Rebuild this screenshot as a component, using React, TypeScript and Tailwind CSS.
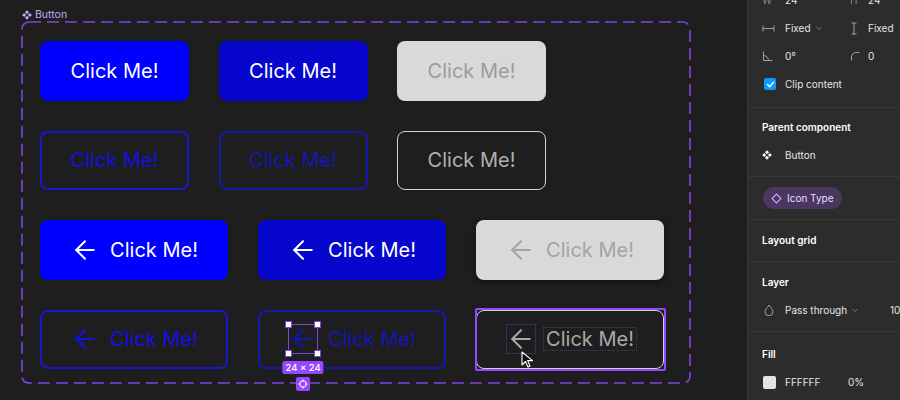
import React from "react";

function Arrow({ className }: { className: string }) {
  return (
    <svg width="30" height="30" viewBox="0 0 24 24" fill="none" className={className} stroke="currentColor" strokeWidth="1.6" strokeLinecap="round" strokeLinejoin="round">
      <path d="M19 12H5" />
      <path d="m12 19-7-7 7-7" />
    </svg>
  );
}

function CompIcon({ className }: { className: string }) {
  return (
    <svg width="10" height="10" viewBox="0 0 10 10" className={className} fill="currentColor">
      <path d="M5 0.2 L7 2.2 L5 4.2 L3 2.2Z" />
      <path d="M2.2 3 L4.2 5 L2.2 7 L0.2 5Z" />
      <path d="M7.8 3 L9.8 5 L7.8 7 L5.8 5Z" />
      <path d="M5 5.8 L7 7.8 L5 9.8 L3 7.8Z" />
    </svg>
  );
}

function Chevron() {
  return (
    <svg width="8" height="8" viewBox="0 0 8 8" fill="none" stroke="#7a7a7a" strokeWidth="1" className="ml-[4px] shrink-0">
      <path d="M1.5 3 L4 5.5 L6.5 3" />
    </svg>
  );
}

export default function App() {
  const label = "text-[20px] leading-none whitespace-nowrap";
  return (
    <div className="w-[900px] h-[400px] flex overflow-hidden bg-[#1e1e1e] font-['Inter','Noto_Sans',sans-serif]">
      {/* Canvas */}
      <div className="flex-1 h-full pl-[21px] pt-[8px]">
        <div className="flex items-center h-[13px] pl-[1px] gap-[3px] text-[10.5px] leading-[13px] text-[#c3a9f0]">
          <CompIcon className="text-[#c3a9f0]" />
          <span>Button</span>
        </div>
        <div className="relative w-[670px] h-[363px] pl-[19px] pt-[20px]">
          <svg className="absolute inset-0 pointer-events-none" width="670" height="363">
            <rect x="1" y="1" width="668" height="361" rx="7" fill="none" stroke="#8244e0" strokeWidth="1.6" strokeDasharray="12 6" />
          </svg>
          <div className="flex flex-col gap-[30px]">
            {/* Row 1 */}
            <div className="flex gap-[29.5px]">
              <div className="w-[149px] h-[59.5px] rounded-lg bg-[#0000ff] text-white flex items-center justify-center">
                <span className={label}>Click Me!</span>
              </div>
              <div className="w-[149px] h-[59.5px] rounded-lg bg-[#0606cc] text-white flex items-center justify-center">
                <span className={label}>Click Me!</span>
              </div>
              <div className="w-[149px] h-[59.5px] rounded-lg bg-[#d9d9d9] text-[#9c9c9c] flex items-center justify-center">
                <span className={label}>Click Me!</span>
              </div>
            </div>
            {/* Row 2 */}
            <div className="flex gap-[29.5px]">
              <div className="w-[149px] h-[59.5px] rounded-lg border-2 border-[#1818d0] text-[#1410e0] flex items-center justify-center">
                <span className={label}>Click Me!</span>
              </div>
              <div className="w-[149px] h-[59.5px] rounded-lg border-2 border-[#1616a8] text-[#1616b4] flex items-center justify-center">
                <span className={label}>Click Me!</span>
              </div>
              <div className="w-[149px] h-[59.5px] rounded-lg border-[1.5px] border-[#d4d4d4] text-[#b0b0b0] flex items-center justify-center">
                <span className={label}>Click Me!</span>
              </div>
            </div>
            {/* Row 3 */}
            <div className="flex gap-[30px]">
              <div className="w-[188px] h-[59.5px] rounded-lg bg-[#0000ff] text-white flex items-center justify-center gap-[10px]">
                <Arrow className="text-white" />
                <span className={label}>Click Me!</span>
              </div>
              <div className="w-[188px] h-[59.5px] rounded-lg bg-[#0606cc] text-white flex items-center justify-center gap-[10px]">
                <Arrow className="text-white" />
                <span className={label}>Click Me!</span>
              </div>
              <div className="w-[188px] h-[59.5px] rounded-lg bg-[#d9d9d9] text-[#a3a3a3] flex items-center justify-center gap-[10px] shadow-[0_2px_6px_rgba(0,0,0,0.45)]">
                <Arrow className="text-[#a3a3a3]" />
                <span className={label}>Click Me!</span>
              </div>
            </div>
            {/* Row 4 */}
            <div className="flex gap-[30px]">
              <div className="w-[188px] h-[59.5px] rounded-lg border-2 border-[#1818d0] text-[#1410e6] flex items-center justify-center gap-[10px]">
                <Arrow className="text-[#1410e6]" />
                <span className={label}>Click Me!</span>
              </div>
              <div className="w-[188px] h-[59.5px] rounded-lg border-2 border-[#1616b0] text-[#1414bc] flex items-center justify-center gap-[10px]">
                <div className="relative w-[30px] h-[30px]">
                  <Arrow className="text-[#1414bc]" />
                  <div className="absolute inset-0 border border-[#7d45e0]" />
                  <div className="absolute -left-[3px] -top-[3px] w-[7px] h-[7px] bg-white border border-[#7d45e0]" />
                  <div className="absolute -right-[3px] -top-[3px] w-[7px] h-[7px] bg-white border border-[#7d45e0]" />
                  <div className="absolute -left-[3px] -bottom-[3px] w-[7px] h-[7px] bg-white border border-[#7d45e0]" />
                  <div className="absolute -right-[3px] -bottom-[3px] w-[7px] h-[7px] bg-white border border-[#7d45e0]" />
                  <div className="absolute left-1/2 -translate-x-1/2 top-[37px] h-[13px] px-[3px] rounded-[2px] bg-[#9747ff] text-white text-[9.5px] leading-[13px] font-medium whitespace-nowrap">
                    24 × 24
                  </div>
                  <div className="absolute left-1/2 -translate-x-1/2 top-[53px] w-[14px] h-[14px] rounded-[2px] bg-[#9747ff] flex items-center justify-center">
                    <svg width="10" height="10" viewBox="0 0 10 10" fill="none" stroke="white" strokeWidth="1">
                      <circle cx="5" cy="5" r="3.2" />
                      <path d="M5 0.5V2.5M5 7.5V9.5M0.5 5H2.5M7.5 5H9.5" />
                    </svg>
                  </div>
                </div>
                <span className={label}>Click Me!</span>
              </div>
              <div className="relative w-[188px] h-[59.5px] rounded-lg border-[1.5px] border-[#d4d4d4] text-[#a8a8a8] flex items-center justify-center gap-[10px]">
                <div className="absolute -inset-[2.5px] border-2 border-[#9747ff] rounded-[2px] pointer-events-none" />
                <div className="relative w-[30px] h-[30px]">
                  <Arrow className="text-[#a8a8a8]" />
                  <div className="absolute inset-0 border border-[#3a2c62]" />
                  <svg className="absolute left-[15px] top-[27px]" width="14" height="17" viewBox="0 0 14 17">
                    <path d="M1 1 L1 14 L4.5 10.5 L7 16 L9 15 L6.6 9.6 L11.5 9.6 Z" fill="#111" stroke="white" strokeWidth="1.1" strokeLinejoin="round" />
                  </svg>
                </div>
                <span className="relative text-[20px] leading-none whitespace-nowrap">
                  <span className="absolute -inset-x-[3px] -inset-y-[2px] border border-dotted border-[#4a3a7c]" />
                  Click Me!
                </span>
              </div>
            </div>
          </div>
        </div>
      </div>

      {/* Right panel */}
      <div className="w-[153px] shrink-0 h-full bg-[#2c2c2c] border-l border-[#383838] overflow-hidden text-[10px] leading-[13px] text-[#e6e6e6]">
        <div className="-mt-[14px] pl-[14px] pb-[9px] border-b border-[#383838]">
          <div className="flex h-[28px] items-center">
            <div className="w-[88px] shrink-0 flex items-center">
              <span className="w-[23px] shrink-0 text-[#8c8c8c]">W</span>
              <span>24</span>
            </div>
            <span className="w-[18px] shrink-0 text-[#8c8c8c]">H</span>
            <span>24</span>
          </div>
          <div className="flex h-[28px] items-center">
            <div className="w-[88px] shrink-0 flex items-center">
              <span className="w-[23px] shrink-0 flex items-center">
                <svg width="13" height="9" viewBox="0 0 13 9" fill="none" stroke="#a0a0a0" strokeWidth="1">
                  <path d="M1 1.5V7.5M12 1.5V7.5M1 4.5H12" />
                </svg>
              </span>
              <span>Fixed</span>
              <Chevron />
            </div>
            <span className="w-[18px] shrink-0 flex items-center">
              <svg width="8" height="13" viewBox="0 0 8 13" fill="none" stroke="#a0a0a0" strokeWidth="1">
                <path d="M1.5 1H6.5M1.5 12H6.5M4 1V12" />
              </svg>
            </span>
            <span className="whitespace-nowrap">Fixed</span>
            <Chevron />
          </div>
          <div className="flex h-[28px] items-center">
            <div className="w-[88px] shrink-0 flex items-center">
              <span className="w-[23px] shrink-0 flex items-center">
                <svg width="11" height="11" viewBox="0 0 11 11" fill="none" stroke="#a0a0a0" strokeWidth="1">
                  <path d="M1.5 0.5V9.5H10.5" />
                  <path d="M1.5 4.5 A5 5 0 0 1 6.5 9.5" />
                </svg>
              </span>
              <span>0°</span>
            </div>
            <span className="w-[18px] shrink-0 flex items-center">
              <svg width="10" height="10" viewBox="0 0 10 10" fill="none" stroke="#a0a0a0" strokeWidth="1">
                <path d="M1.5 9.5V6 A4.5 4.5 0 0 1 6 1.5H9.5" />
              </svg>
            </span>
            <span>0</span>
          </div>
          <div className="flex h-[28px] items-center">
            <span className="w-[23px] shrink-0 flex items-center">
              <span className="ml-[2px] w-[12px] h-[12px] rounded-[2px] bg-[#0d99ff] flex items-center justify-center">
                <svg width="9" height="9" viewBox="0 0 9 9" fill="none" stroke="white" strokeWidth="1.4" strokeLinecap="round" strokeLinejoin="round">
                  <path d="M1.5 4.6 L3.6 6.7 L7.6 2.2" />
                </svg>
              </span>
            </span>
            <span>Clip content</span>
          </div>
        </div>

        <div className="pt-[5px] pb-[7px] pl-[14px] border-b border-[#383838]">
          <div className="flex h-[28px] items-center font-semibold text-white">Parent component</div>
          <div className="flex h-[28px] items-center">
            <span className="w-[23px] shrink-0 flex items-center">
              <CompIcon className="text-white" />
            </span>
            <span>Button</span>
          </div>
        </div>

        <div className="py-[10px] pl-[15px] border-b border-[#383838]">
          <div className="inline-flex h-[22px] items-center gap-[5px] px-[8px] rounded-full bg-[#4a3760] text-[#ecdfff]">
            <svg width="11" height="11" viewBox="0 0 11 11" fill="none" stroke="#c9a6ff" strokeWidth="1.1">
              <path d="M5.5 1 L10 5.5 L5.5 10 L1 5.5Z" />
            </svg>
            <span>Icon Type</span>
          </div>
        </div>

        <div className="h-[42px] flex items-center pl-[14px] border-b border-[#383838] font-semibold text-white">
          Layout grid
        </div>

        <div className="pt-[6px] pb-[7px] pl-[14px] border-b border-[#383838]">
          <div className="flex h-[28px] items-center font-semibold text-white">Layer</div>
          <div className="flex h-[28px] items-center">
            <div className="w-[128px] shrink-0 flex items-center">
              <span className="w-[23px] shrink-0 flex items-center pl-[2px]">
                <svg width="10" height="12" viewBox="0 0 10 12" fill="none" stroke="#a0a0a0" strokeWidth="1">
                  <path d="M5 1 C6.5 3.5 9 5.5 9 7.8 A4 4 0 0 1 1 7.8 C1 5.5 3.5 3.5 5 1Z" />
                </svg>
              </span>
              <span className="whitespace-nowrap">Pass through</span>
              <Chevron />
            </div>
            <span className="shrink-0 whitespace-nowrap">100%</span>
          </div>
        </div>

        <div className="pt-[8px] pl-[14px]">
          <div className="flex h-[28px] items-center font-semibold text-white">Fill</div>
          <div className="flex h-[28px] items-center">
            <span className="w-[23px] shrink-0 flex items-center">
              <span className="ml-[1px] w-[13px] h-[13px] rounded-[2px] bg-[#e4e4e4]" />
            </span>
            <span className="w-[63px] shrink-0">FFFFFF</span>
            <span>0%</span>
          </div>
        </div>
      </div>
    </div>
  );
}
